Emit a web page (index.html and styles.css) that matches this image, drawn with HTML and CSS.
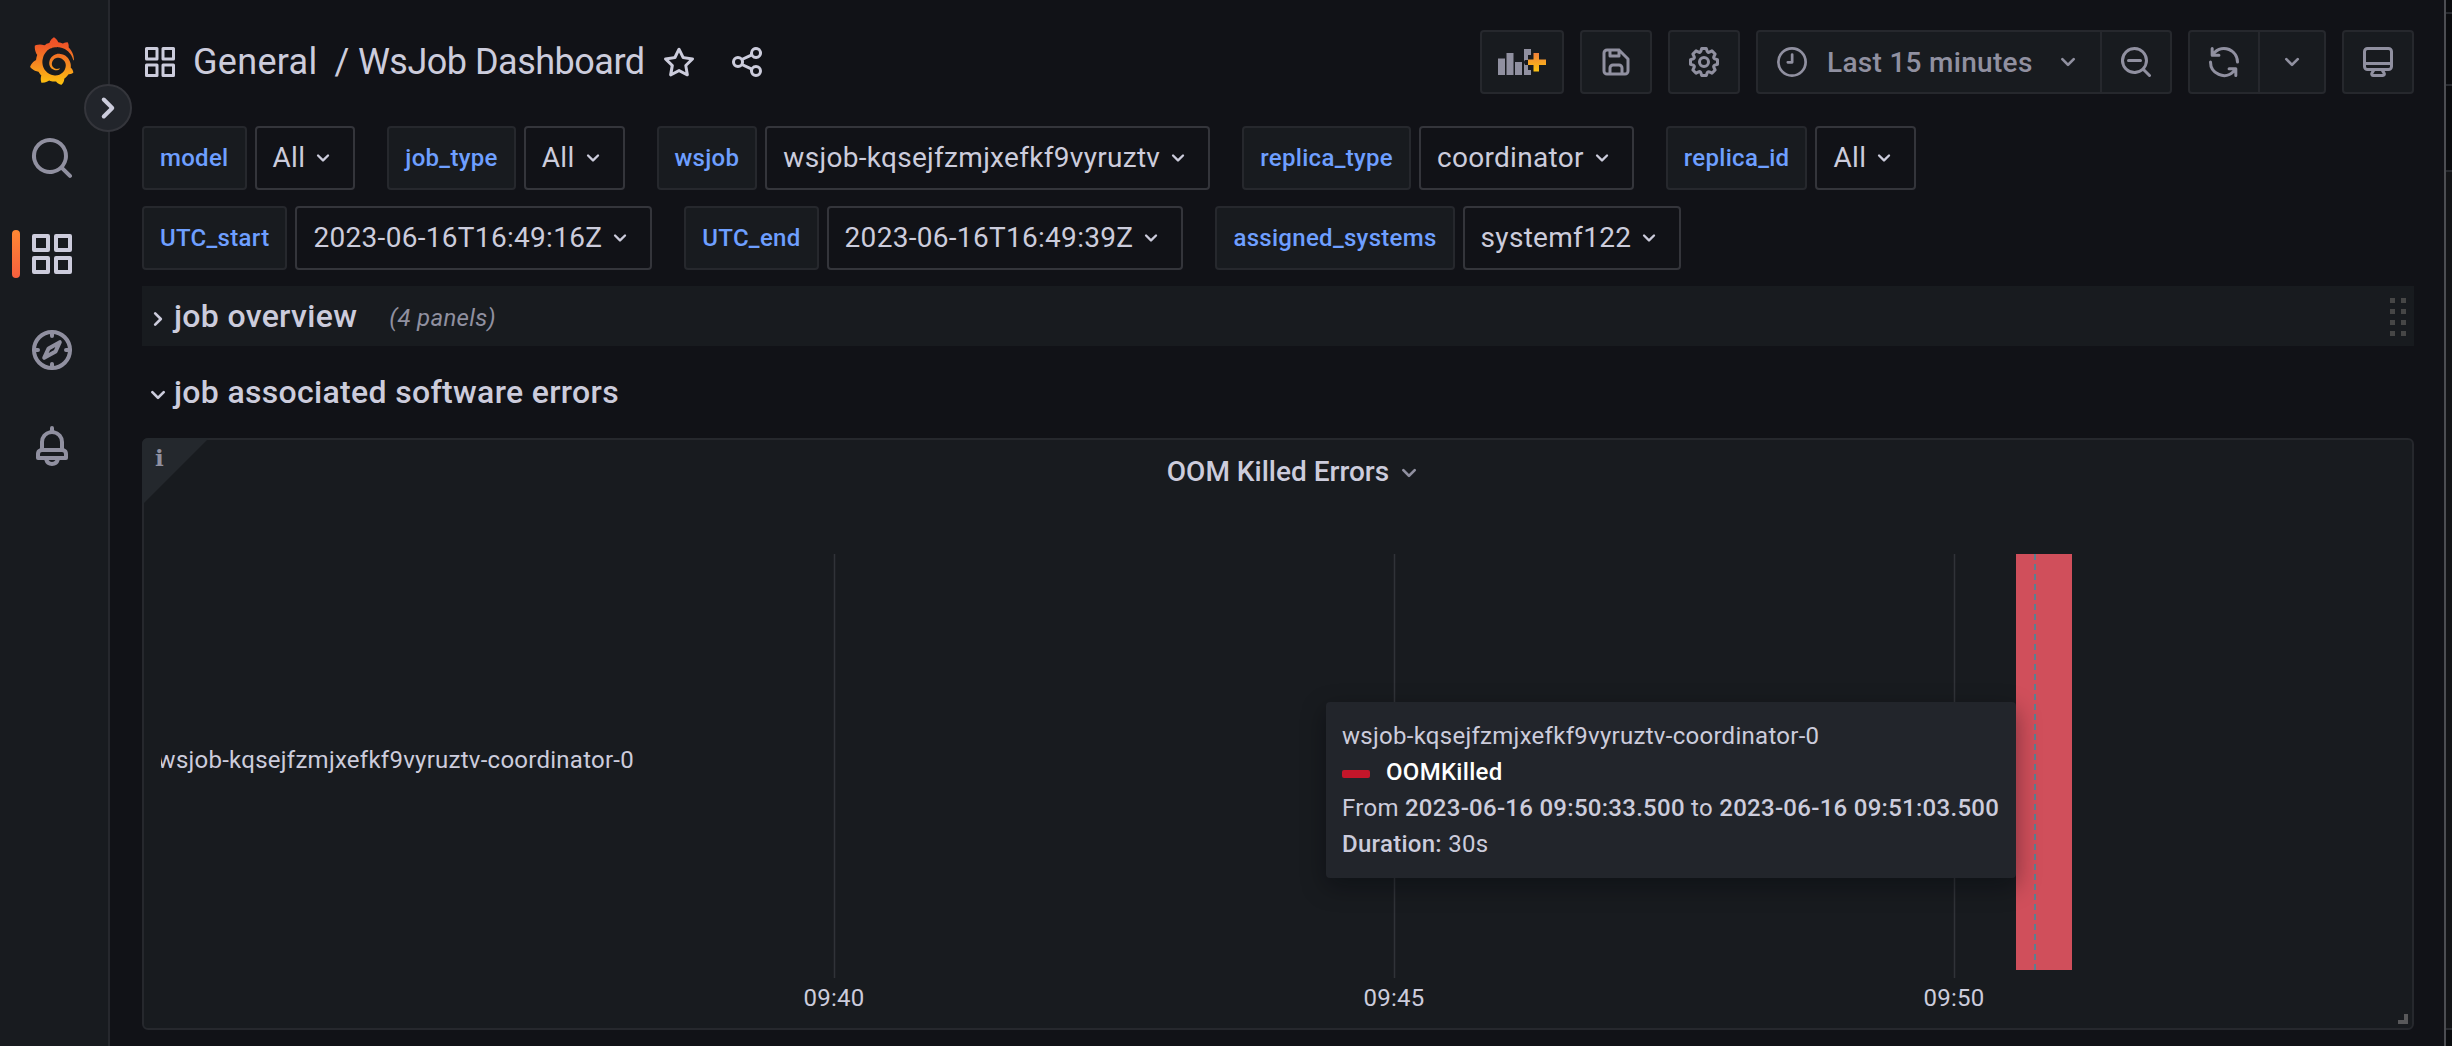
FILE: index.html
```html
<!DOCTYPE html>
<html lang="en">
<head>
  <meta charset="UTF-8">
  <title>WsJob Dashboard - Grafana</title>
  <link rel="stylesheet" href="styles.css">
</head>
<body>
  <!-- icon sprite -->
  <svg class="sprite">
    <symbol id="apps" viewBox="0 0 24 24"><path d="M10,13H3a1,1,0,0,0-1,1v7a1,1,0,0,0,1,1h7a1,1,0,0,0,1-1V14A1,1,0,0,0,10,13ZM9,20H4V15H9ZM21,2H14a1,1,0,0,0-1,1v7a1,1,0,0,0,1,1h7a1,1,0,0,0,1-1V3A1,1,0,0,0,21,2ZM20,9H15V4h5Zm1,4H14a1,1,0,0,0-1,1v7a1,1,0,0,0,1,1h7a1,1,0,0,0,1-1V14A1,1,0,0,0,21,13Zm-1,7H15V15h5ZM10,2H3A1,1,0,0,0,2,3v7a1,1,0,0,0,1,1h7a1,1,0,0,0,1-1V3A1,1,0,0,0,10,2ZM9,9H4V4H9Z"/></symbol>
    <symbol id="search" viewBox="0 0 24 24"><path d="M21.71,20.29,18,16.61A9,9,0,1,0,16.61,18l3.68,3.68a1,1,0,0,0,1.42,0A1,1,0,0,0,21.71,20.29ZM11,18a7,7,0,1,1,7-7A7,7,0,0,1,11,18Z"/></symbol>
    <symbol id="compass" viewBox="0 0 24 24"><g fill="none" stroke="currentColor" stroke-width="2" stroke-linecap="round" stroke-linejoin="round"><circle cx="12" cy="12" r="9"/><path d="M12 3v2M12 19v2M3 12h2M19 12h2M15.9 8.1L13.8 12.7L8.1 15.9L10.3 11.2Z"/></g></symbol>
    <symbol id="bell" viewBox="0 0 24 24"><path d="M18,13.18V10a6,6,0,0,0-5-5.91V3a1,1,0,0,0-2,0V4.09A6,6,0,0,0,6,10v3.18A3,3,0,0,0,4,16v2a1,1,0,0,0,1,1H8.14a4,4,0,0,0,7.72,0H19a1,1,0,0,0,1-1V16A3,3,0,0,0,18,13.18ZM8,10a4,4,0,0,1,8,0v3H8Zm4,10a2,2,0,0,1-1.72-1h3.44A2,2,0,0,1,12,20Zm6-3H6V16a1,1,0,0,1,1-1H17a1,1,0,0,1,1,1Z"/></symbol>
    <symbol id="star" viewBox="0 0 24 24"><path d="M22,9.67A1,1,0,0,0,21.14,9l-5.69-.83L12.9,3a1,1,0,0,0-1.8,0L8.55,8.16,2.86,9a1,1,0,0,0-.81.68,1,1,0,0,0,.25,1l4.13,4-1,5.68A1,1,0,0,0,6.9,21.44L12,18.77l5.1,2.67a.93.93,0,0,0,.46.12,1,1,0,0,0,.59-.19,1,1,0,0,0,.4-1l-1-5.68,4.13-4A1,1,0,0,0,22,9.67Zm-6.15,4a1,1,0,0,0-.29.88l.72,4.2-3.76-2a1.06,1.06,0,0,0-.94,0l-3.76,2,.72-4.2a1,1,0,0,0-.29-.88l-3-3,4.21-.61a1,1,0,0,0,.76-.55L12,5.7l1.88,3.82a1,1,0,0,0,.76.55l4.21.61Z"/></symbol>
    <symbol id="share" viewBox="0 0 24 24"><path d="M18,14a4,4,0,0,0-3.08,1.48l-5.1-2.35a3.64,3.64,0,0,0,0-2.26l5.1-2.35A4,4,0,1,0,14,6a4.17,4.17,0,0,0,.07.71L8.79,9.14a4,4,0,1,0,0,5.72l5.28,2.43A4.17,4.17,0,0,0,14,18a4,4,0,1,0,4-4ZM18,4a2,2,0,1,1-2,2A2,2,0,0,1,18,4ZM6,14a2,2,0,1,1,2-2A2,2,0,0,1,6,14Zm12,6a2,2,0,1,1,2-2A2,2,0,0,1,18,20Z"/></symbol>
    <symbol id="save" viewBox="0 0 24 24"><path d="M20.71,9.29l-6-6a1,1,0,0,0-.32-.21A1.09,1.09,0,0,0,14,3H6A3,3,0,0,0,3,6V18a3,3,0,0,0,3,3H18a3,3,0,0,0,3-3V10A1,1,0,0,0,20.71,9.29ZM9,5h4V7H9Zm6,14H9V16a1,1,0,0,1,1-1h4a1,1,0,0,1,1,1Zm4-1a1,1,0,0,1-1,1H17V16a3,3,0,0,0-3-3H10a3,3,0,0,0-3,3v3H6a1,1,0,0,1-1-1V6A1,1,0,0,1,6,5H7V8A1,1,0,0,0,8,9h6a1,1,0,0,0,1-1V6.41l4,4Z"/></symbol>
    <symbol id="cog" viewBox="0 0 24 24"><path d="M21.32,9.55l-1.89-.63.89-1.78A1,1,0,0,0,20.13,6L18,3.87a1,1,0,0,0-1.15-.19l-1.78.89-.63-1.89A1,1,0,0,0,13.5,2h-3a1,1,0,0,0-.95.68L8.92,4.57,7.14,3.68A1,1,0,0,0,6,3.87L3.87,6a1,1,0,0,0-.19,1.15l.89,1.78-1.89.63A1,1,0,0,0,2,10.5v3a1,1,0,0,0,.68.95l1.89.63-.89,1.78A1,1,0,0,0,3.87,18L6,20.13a1,1,0,0,0,1.15.19l1.78-.89.63,1.89a1,1,0,0,0,.95.68h3a1,1,0,0,0,.95-.68l.63-1.89,1.78.89A1,1,0,0,0,18,20.13L20.13,18a1,1,0,0,0,.19-1.15l-.89-1.78,1.89-.63A1,1,0,0,0,22,13.5v-3A1,1,0,0,0,21.32,9.55ZM20,12.78l-1.2.4A2,2,0,0,0,17.64,16l.57,1.14-1.1,1.1L16,17.64a2,2,0,0,0-2.79,1.16l-.4,1.2H11.22l-.4-1.2A2,2,0,0,0,8,17.64l-1.14.57-1.1-1.1L6.36,16A2,2,0,0,0,5.2,13.18L4,12.78V11.22l1.2-.4A2,2,0,0,0,6.36,8L5.79,6.89l1.1-1.1L8,6.36A2,2,0,0,0,10.82,5.2l.4-1.2h1.56l.4,1.2A2,2,0,0,0,16,6.36l1.14-.57,1.1,1.1L17.64,8a2,2,0,0,0,1.16,2.79l1.2.4ZM12,8a4,4,0,1,0,4,4A4,4,0,0,0,12,8Zm0,6a2,2,0,1,1,2-2A2,2,0,0,1,12,14Z"/></symbol>
    <symbol id="clock" viewBox="0 0 24 24"><g fill="none" stroke="currentColor" stroke-width="1.8" stroke-linecap="round" stroke-linejoin="round"><circle cx="12" cy="12" r="9.1"/><path d="M12.1 7v5.2H9.2"/></g></symbol>
    <symbol id="zoom-out" viewBox="0 0 24 24"><path d="M21.71,20.29,18,16.61A9,9,0,1,0,16.61,18l3.68,3.68a1,1,0,0,0,1.42,0A1,1,0,0,0,21.71,20.29ZM11,18a7,7,0,1,1,7-7A7,7,0,0,1,11,18ZM15,10H7a1,1,0,0,0,0,2h8a1,1,0,0,0,0-2Z"/></symbol>
    <symbol id="sync" viewBox="0 0 24 24"><path d="M19.91,15.51H15.38a1,1,0,0,0,0,2h2.4A8,8,0,0,1,4,12a1,1,0,0,0-2,0,10,10,0,0,0,16.88,7.23V21a1,1,0,0,0,2,0V16.5A1,1,0,0,0,19.91,15.51ZM12,2A10,10,0,0,0,5.12,4.77V3a1,1,0,0,0-2,0V7.5a1,1,0,0,0,1,1h4.5a1,1,0,0,0,0-2H6.22A8,8,0,0,1,20,12a1,1,0,0,0,2,0A10,10,0,0,0,12,2Z"/></symbol>
    <symbol id="monitor" viewBox="0 0 24 24"><path d="M19,2H5A3,3,0,0,0,2,5V15a3,3,0,0,0,3,3H7.64l-.58,1a2,2,0,0,0,0,2,2,2,0,0,0,1.75,1h6.46A2,2,0,0,0,17,21a2,2,0,0,0,0-2l-.59-1H19a3,3,0,0,0,3-3V5A3,3,0,0,0,19,2ZM8.77,20,10,18H14l1.2,2ZM20,15a1,1,0,0,1-1,1H5a1,1,0,0,1-1-1V14H20Zm0-3H4V5A1,1,0,0,1,5,4H19a1,1,0,0,1,1,1Z"/></symbol>
    <symbol id="angle-down" viewBox="0 0 24 24"><path d="M17,9.17a1,1,0,0,0-1.41,0L12,12.71,8.46,9.17a1,1,0,0,0-1.41,0,1,1,0,0,0,0,1.42l4.24,4.24a1,1,0,0,0,1.42,0L17,10.59A1,1,0,0,0,17,9.17Z"/></symbol>
    <symbol id="angle-right" viewBox="0 0 24 24"><path d="M14.83,11.29,10.59,7.05a1,1,0,0,0-1.42,0,1,1,0,0,0,0,1.41L12.71,12,9.17,15.54a1,1,0,0,0,0,1.41,1,1,0,0,0,.71.29,1,1,0,0,0,.71-.29l4.24-4.24A1,1,0,0,0,14.83,11.29Z"/></symbol>
  </svg>

  <nav class="sidebar">
    <svg class="logo" viewBox="0 0 351 365">
      <defs><linearGradient id="logo-fill" x1="0" y1="1" x2="0" y2="0"><stop offset="0" stop-color="#fcc40e"/><stop offset=".42" stop-color="#f58a20"/><stop offset=".85" stop-color="#ef5528"/><stop offset="1" stop-color="#ee4f28"/></linearGradient></defs>
      <path fill="url(#logo-fill)" d="M342,161.2c-0.6-6.1-1.6-13.1-3.6-20.9c-2-7.7-5-16.2-9.4-25c-4.4-8.8-10.1-17.9-17.5-26.8c-2.9-3.5-6.1-6.9-9.5-10.2c5.1-20.3-6.2-37.9-6.2-37.9c-19.5-1.2-31.9,6.1-36.5,9.4c-0.8-0.3-1.5-0.7-2.3-1c-3.3-1.3-6.7-2.6-10.3-3.7c-3.5-1.1-7.1-2.1-10.8-3c-3.7-0.9-7.4-1.6-11.2-2.2c-0.7-0.1-1.3-0.2-2-0.3c-8.5-27.2-32.9-38.6-32.9-38.6c-27.3,17.3-32.4,41.5-32.4,41.5s-0.1,0.5-0.3,1.4c-1.5,0.4-3,0.9-4.5,1.3c-2.1,0.6-4.2,1.4-6.2,2.2c-2.1,0.8-4.1,1.6-6.2,2.5c-4.1,1.8-8.2,3.8-12.2,6c-3.9,2.2-7.7,4.6-11.4,7.1c-0.5-0.2-1-0.4-1-0.4c-37.8-14.4-71.3,2.9-71.3,2.9c-3.1,40.2,15.1,65.5,18.7,70.1c-0.9,2.5-1.7,5-2.5,7.5c-2.8,9.1-4.9,18.4-6.2,28.1c-0.2,1.4-0.4,2.8-0.5,4.2C18.8,192.7,8.5,228,8.5,228c29.1,33.5,63.1,35.6,63.1,35.6c0,0,0.1-0.1,0.1-0.1c4.3,7.7,9.3,15,14.9,21.9c2.4,2.9,4.8,5.6,7.4,8.3c-10.6,30.4,1.5,55.6,1.5,55.6c32.4,1.2,53.7-14.2,58.2-17.7c3.2,1.1,6.5,2.1,9.8,2.9c10,2.6,20.2,4.1,30.4,4.5c2.5,0.1,5.1,0.2,7.6,0.1l1.2,0l0.8,0l1.6,0l1.6-0.1l0,0.1c15.3,21.8,42.1,24.9,42.1,24.9c19.1-20.1,20.2-40.1,20.2-44.4l0,0c0,0,0-0.1,0-0.3c0-0.4,0-0.6,0-0.6l0,0c0-0.3,0-0.6,0-0.9c4-2.8,7.8-5.8,11.4-9.1c7.6-6.9,14.3-14.8,19.9-23.3c0.5-0.8,1-1.6,1.5-2.4c21.6,1.2,36.9-13.4,36.9-13.4c-3.6-22.5-16.4-33.5-19.1-35.6l0,0c0,0-0.1-0.1-0.3-0.2c-0.2-0.1-0.2-0.2-0.2-0.2c0,0,0,0,0,0c-0.1-0.1-0.3-0.2-0.5-0.3c0.1-1.4,0.2-2.7,0.3-4.1c0.2-2.4,0.2-4.9,0.2-7.3l0-1.8l0-0.9l0-0.5c0-0.6,0-0.4,0-0.6l-0.1-1.5l-0.1-2c0-0.7-0.1-1.3-0.2-1.9c-0.1-0.6-0.1-1.3-0.2-1.9l-0.2-1.9l-0.3-1.9c-0.4-2.5-0.8-4.9-1.4-7.4c-2.3-9.7-6.1-18.9-11-27.2c-5-8.3-11.2-15.6-18.3-21.8c-7-6.2-14.9-11.2-23.1-14.9c-8.3-3.7-16.9-6.1-25.5-7.2c-4.3-0.6-8.6-0.8-12.9-0.7l-1.6,0l-0.4,0c-0.1,0-0.6,0-0.5,0l-0.7,0l-1.6,0.1c-0.6,0-1.2,0.1-1.7,0.1c-2.2,0.2-4.4,0.5-6.5,0.9c-8.6,1.6-16.7,4.7-23.8,9c-7.1,4.3-13.3,9.6-18.3,15.6c-5,6-8.9,12.7-11.6,19.6c-2.7,6.9-4.2,14.1-4.6,21c-0.1,1.7-0.1,3.5-0.1,5.2c0,0.4,0,0.9,0,1.3l0.1,1.4c0.1,0.8,0.1,1.7,0.2,2.5c0.3,3.5,1,6.9,1.9,10.1c1.9,6.5,4.9,12.4,8.6,17.4c3.7,5,8.2,9.1,12.9,12.4c4.7,3.2,9.8,5.5,14.8,7c5,1.5,10,2.1,14.7,2.1c0.6,0,1.2,0,1.7,0c0.3,0,0.6,0,0.9,0c0.3,0,0.6,0,0.9-0.1c0.5,0,1-0.1,1.5-0.1c0.1,0,0.3,0,0.4-0.1l0.5-0.1c0.3,0,0.6-0.1,0.9-0.1c0.6-0.1,1.1-0.2,1.7-0.3c0.6-0.1,1.1-0.2,1.6-0.4c1.1-0.2,2.1-0.6,3.1-0.9c2-0.7,4-1.5,5.7-2.4c1.8-0.9,3.4-2,5-3c0.4-0.3,0.9-0.6,1.3-1c1.6-1.3,1.9-3.7,0.6-5.3c-1.1-1.4-3.1-1.8-4.7-0.9c-0.4,0.2-0.8,0.4-1.2,0.6c-1.4,0.7-2.8,1.3-4.3,1.8c-1.5,0.5-3.1,0.9-4.7,1.2c-0.8,0.1-1.6,0.2-2.5,0.3c-0.4,0-0.8,0.1-1.3,0.1c-0.4,0-0.9,0-1.2,0c-0.4,0-0.8,0-1.2,0c-0.5,0-1,0-1.5-0.1c0,0-0.3,0-0.1,0l-0.2,0l-0.3,0c-0.2,0-0.5,0-0.7-0.1c-0.5-0.1-0.9-0.1-1.4-0.2c-3.7-0.5-7.4-1.6-10.9-3.2c-3.6-1.6-7-3.8-10.1-6.6c-3.1-2.8-5.8-6.1-7.9-9.9c-2.1-3.8-3.6-8-4.3-12.4c-0.3-2.2-0.5-4.5-0.4-6.7c0-0.6,0.1-1.2,0.1-1.8c0,0.2,0-0.1,0-0.1l0-0.2l0-0.5c0-0.3,0.1-0.6,0.1-0.9c0.1-1.2,0.3-2.4,0.5-3.6c1.7-9.6,6.5-19,13.9-26.1c1.9-1.8,3.9-3.4,6-4.9c2.1-1.5,4.4-2.8,6.8-3.9c2.4-1.1,4.8-2,7.4-2.7c2.5-0.7,5.1-1.1,7.8-1.4c1.3-0.1,2.6-0.2,4-0.2c0.4,0,0.6,0,0.9,0l1.1,0l0.7,0c0.3,0,0,0,0.1,0l0.3,0l1.1,0.1c2.9,0.2,5.7,0.6,8.5,1.3c5.6,1.2,11.1,3.3,16.2,6.1c10.2,5.7,18.9,14.5,24.2,25.1c2.7,5.3,4.6,11,5.5,16.9c0.2,1.5,0.4,3,0.5,4.5l0.1,1.1l0.1,1.1c0,0.4,0,0.8,0,1.1c0,0.4,0,0.8,0,1.1l0,1l0,1.1c0,0.7-0.1,1.9-0.1,2.6c-0.1,1.6-0.3,3.3-0.5,4.9c-0.2,1.6-0.5,3.2-0.8,4.8c-0.3,1.6-0.7,3.2-1.1,4.7c-0.8,3.1-1.8,6.2-3,9.3c-2.4,6-5.6,11.8-9.4,17.1c-7.7,10.6-18.2,19.2-30.2,24.7c-6,2.7-12.3,4.7-18.8,5.7c-3.2,0.6-6.5,0.9-9.8,1l-0.6,0l-0.5,0l-1.1,0l-1.6,0l-0.8,0c0.4,0-0.1,0-0.1,0l-0.3,0c-1.8,0-3.5-0.1-5.3-0.3c-7-0.5-13.9-1.8-20.7-3.7c-6.7-1.9-13.2-4.6-19.4-7.8c-12.3-6.6-23.4-15.6-32-26.5c-4.3-5.4-8.1-11.3-11.2-17.4c-3.1-6.1-5.6-12.6-7.4-19.1c-1.8-6.6-2.9-13.3-3.4-20.1l-0.1-1.3l0-0.3l0-0.3l0-0.6l0-1.1l0-0.3l0-0.4l0-0.8l0-1.6l0-0.3c0,0,0,0.1,0-0.1l0-0.6c0-0.8,0-1.7,0-2.5c0.1-3.3,0.4-6.8,0.8-10.2c0.4-3.4,1-6.9,1.7-10.3c0.7-3.4,1.5-6.8,2.5-10.2c1.9-6.7,4.3-13.2,7.1-19.3c5.7-12.2,13.1-23.1,22-31.8c2.2-2.2,4.5-4.2,6.9-6.2c2.4-1.9,4.9-3.7,7.5-5.4c2.5-1.7,5.2-3.2,7.9-4.6c1.3-0.7,2.7-1.4,4.1-2c0.7-0.3,1.4-0.6,2.1-0.9c0.7-0.3,1.4-0.6,2.1-0.9c2.8-1.2,5.7-2.2,8.7-3.1c0.7-0.2,1.5-0.4,2.2-0.7c0.7-0.2,1.5-0.4,2.2-0.6c1.5-0.4,3-0.8,4.5-1.1c0.7-0.2,1.5-0.3,2.3-0.5c0.8-0.2,1.5-0.3,2.3-0.5c0.8-0.1,1.5-0.3,2.3-0.4l1.1-0.2l1.2-0.2c0.8-0.1,1.5-0.2,2.3-0.3c0.9-0.1,1.7-0.2,2.6-0.3c0.7-0.1,1.9-0.2,2.6-0.3c0.5-0.1,1.1-0.1,1.6-0.2l1.1-0.1l0.5-0.1l0.6,0c0.9-0.1,1.7-0.1,2.6-0.2l1.3-0.1c0,0,0.5,0,0.1,0l0.3,0l0.6,0c0.7,0,1.5-0.1,2.2-0.1c2.9-0.1,5.9-0.1,8.8,0c5.8,0.2,11.5,0.9,17,1.9c11.1,2.1,21.5,5.6,31,10.3c9.5,4.6,17.9,10.3,25.3,16.5c0.5,0.4,0.9,0.8,1.4,1.2c0.4,0.4,0.9,0.8,1.3,1.2c0.9,0.8,1.7,1.6,2.6,2.4c0.9,0.8,1.7,1.6,2.5,2.4c0.8,0.8,1.6,1.6,2.4,2.5c3.1,3.3,6,6.6,8.6,10c5.2,6.7,9.4,13.5,12.7,19.9c0.2,0.4,0.4,0.8,0.6,1.2c0.2,0.4,0.4,0.8,0.6,1.2c0.4,0.8,0.8,1.6,1.1,2.4c0.4,0.8,0.7,1.5,1.1,2.3c0.3,0.8,0.7,1.5,1,2.3c1.2,3,2.4,5.9,3.3,8.6c1.5,4.4,2.6,8.3,3.5,11.7c0.3,1.4,1.6,2.3,3,2.1c1.5-0.1,2.6-1.3,2.6-2.8C342.6,170.4,342.5,166.1,342,161.2z"/>
    </svg>
    <a class="nav-item"><svg class="icon"><use href="#search"/></svg></a>
    <a class="nav-item active"><svg class="icon"><use href="#apps"/></svg></a>
    <a class="nav-item"><svg class="icon"><use href="#compass"/></svg></a>
    <a class="nav-item"><svg class="icon"><use href="#bell"/></svg></a>
    <button class="nav-toggle"><svg class="icon"><use href="#angle-right"/></svg></button>
  </nav>

  <main class="page">
    <header class="toolbar">
      <svg class="icon md"><use href="#apps"/></svg>
      <h1><span class="folder">General</span><span class="sep">/</span>WsJob Dashboard</h1>
      <svg class="icon md star"><use href="#star"/></svg>
      <svg class="icon md share"><use href="#share"/></svg>
      <div class="actions">
        <button class="btn add-panel">
          <svg width="50" height="28" viewBox="0 0 50 28">
            <defs><linearGradient id="plus-fill" x1="0" y1="0" x2="0" y2="1"><stop offset="0" stop-color="#f1803a"/><stop offset="1" stop-color="#fcc310"/></linearGradient></defs>
            <path d="M1 10.5h7V27H1zM9.5 5h7v22h-7zM18 14h7v13h-7zM27 1h7v6h-3v5h-3q-2 2 0 5h3v5h3v5h-7z" fill="currentColor"/>
            <path d="M36.500 5h5.500v6.500H49v5.500h-7v6.500h-5.500v-6.500H31v-5.500h5.500z" fill="url(#plus-fill)"/>
          </svg>
        </button>
        <button class="btn"><svg class="icon md"><use href="#save"/></svg></button>
        <button class="btn"><svg class="icon md"><use href="#cog"/></svg></button>
        <div class="btn-group">
          <button class="btn time"><svg class="icon md"><use href="#clock"/></svg><span>Last 15 minutes</span><svg class="icon sm"><use href="#angle-down"/></svg></button>
          <button class="btn"><svg class="icon md"><use href="#zoom-out"/></svg></button>
        </div>
        <div class="btn-group">
          <button class="btn"><svg class="icon md"><use href="#sync"/></svg></button>
          <button class="btn interval"><svg class="icon sm"><use href="#angle-down"/></svg></button>
        </div>
        <button class="btn"><svg class="icon md"><use href="#monitor"/></svg></button>
      </div>
    </header>

    <section class="variables">
      <div class="var-row">
        <div class="variable"><label>model</label><div class="select">All<svg class="icon xs"><use href="#angle-down"/></svg></div></div>
        <div class="variable"><label>job_type</label><div class="select">All<svg class="icon xs"><use href="#angle-down"/></svg></div></div>
        <div class="variable"><label>wsjob</label><div class="select">wsjob-kqsejfzmjxefkf9vyruztv<svg class="icon xs"><use href="#angle-down"/></svg></div></div>
        <div class="variable"><label>replica_type</label><div class="select">coordinator<svg class="icon xs"><use href="#angle-down"/></svg></div></div>
        <div class="variable"><label>replica_id</label><div class="select">All<svg class="icon xs"><use href="#angle-down"/></svg></div></div>
      </div>
      <div class="var-row">
        <div class="variable"><label>UTC_start</label><div class="select">2023-06-16T16:49:16Z<svg class="icon xs"><use href="#angle-down"/></svg></div></div>
        <div class="variable"><label>UTC_end</label><div class="select">2023-06-16T16:49:39Z<svg class="icon xs"><use href="#angle-down"/></svg></div></div>
        <div class="variable"><label>assigned_systems</label><div class="select">systemf122<svg class="icon xs"><use href="#angle-down"/></svg></div></div>
      </div>
    </section>

    <div class="dash-row collapsed">
      <svg class="icon sm"><use href="#angle-right"/></svg><h2>job overview</h2><span class="count">(4 panels)</span>
      <div class="grip"><i></i><i></i><i></i><i></i><i></i><i></i><i></i><i></i></div>
    </div>
    <div class="dash-row">
      <svg class="icon sm"><use href="#angle-down"/></svg><h2>job associated software errors</h2>
    </div>

    <section class="panel">
      <div class="info-corner"><span>i</span></div>
      <div class="panel-title">OOM Killed Errors<svg class="icon sm"><use href="#angle-down"/></svg></div>
      <svg class="chart" width="2268" height="522" viewBox="0 0 2268 522">
        <clipPath id="axis-clip"><rect x="17" y="200" width="500" height="100"/></clipPath>
        <g class="grid">
          <path d="M690.500 48v424M1250.500 48v424M1810.500 48v424"/>
        </g>
        <g class="axis">
          <text x="490" y="262" text-anchor="end" clip-path="url(#axis-clip)">wsjob-kqsejfzmjxefkf9vyruztv-coordinator-0</text>
          <text x="690" y="500" text-anchor="middle">09:40</text>
          <text x="1250" y="500" text-anchor="middle">09:45</text>
          <text x="1810" y="500" text-anchor="middle">09:50</text>
        </g>
        <rect class="bar" x="1872" y="48" width="56" height="416"/>
        <path class="cursor" d="M1891 48v416"/>
      </svg>
      <div class="tooltip">
        <div>wsjob-kqsejfzmjxefkf9vyruztv-coordinator-0</div>
        <div class="series"><i></i>OOMKilled</div>
        <div>From <b>2023-06-16 09:50:33.500</b> to <b>2023-06-16 09:51:03.500</b></div>
        <div><b>Duration:</b> 30s</div>
      </div>
      <div class="resize"></div>
    </section>
  </main>

  <aside class="edge"><div></div><div></div><div></div><div class="rest"></div></aside>
</body>
</html>
```
FILE: styles.css
```css
:root {
  --bg: #111217;
  --panel: #181b1f;
  --raised: #22252b;
  --text: #ccccdc;
  --muted: #9090a0;
  --line: #26282d;
  --line-strong: #34353b;
  --link: #6e9fff;
}
* { box-sizing: border-box; }
body { margin: 0; height: 1046px; display: flex; overflow: hidden; background: var(--bg); color: var(--text); font-family: Roboto, sans-serif; font-size: 28px; letter-spacing: 0.01071em; }
h1, h2 { margin: 0; font-weight: 500; }
b { font-weight: 500; }
button { font: inherit; letter-spacing: inherit; padding: 0; }
.sprite { position: absolute; width: 0; height: 0; }
.icon { display: block; flex: none; width: 48px; height: 48px; fill: currentColor; }
.icon.md { width: 36px; height: 36px; }
.icon.sm { width: 32px; height: 32px; }
.icon.xs { width: 28px; height: 28px; }

/* sidebar */
.sidebar { position: relative; flex: none; width: 110px; background: var(--panel); border-right: 2px solid var(--line); display: flex; flex-direction: column; padding-top: 37px; }
.logo { width: 46px; height: 48px; margin: 0 0 25px 29px; }
.nav-item { position: relative; height: 96px; padding: 24px 0 0 28px; color: var(--muted); }
.nav-item.active { color: var(--text); }
.nav-item.active::before { content: ""; position: absolute; left: 12px; top: 24px; width: 8px; height: 48px; border-radius: 4px; background: linear-gradient(#ff8833, #f55f3e); }
.nav-toggle { position: absolute; left: 84px; top: 84px; width: 48px; height: 48px; border: 2px solid var(--line-strong); border-radius: 50%; background: var(--raised); color: var(--text); display: flex; align-items: center; justify-content: center; }

/* main column */
.page { flex: none; width: 2334px; padding: 30px 30px 0 32px; }
.toolbar { display: flex; align-items: center; height: 64px; }
h1 { display: flex; margin-left: 15px; font-size: 36px; font-weight: 400; white-space: nowrap; line-height: 64px; letter-spacing: -0.5px; }
.folder { margin-right: 17px; letter-spacing: 0.3px; }
.sep { margin-right: 9px; }
.star { margin-left: 16px; }
.share { margin-left: 32px; }
.actions { margin-left: auto; display: flex; gap: 16px; }
.btn { display: flex; align-items: center; justify-content: center; width: 72px; height: 64px; border: 2px solid var(--line); border-radius: 4px; background: var(--panel); color: var(--muted); }
.add-panel { width: 84px; }
.btn-group { display: flex; }
.btn-group .btn:first-child { border-radius: 4px 0 0 4px; }
.btn-group .btn:last-child { border-radius: 0 4px 4px 0; border-left: 0; }
.btn-group .btn:last-child { width: 70px; }
.btn-group .interval:last-child { width: 66px; }
.time.btn { width: 346px; justify-content: flex-start; padding: 0 16px; font-weight: 500; white-space: nowrap; }
.time span { margin: 0 auto 0 17px; }

.variables { display: flex; flex-direction: column; gap: 16px; margin: 32px 0 16px; }
.var-row { display: flex; gap: 32px; }
.variable { display: flex; gap: 8px; }
.variable label, .select { display: flex; align-items: center; height: 64px; border-radius: 4px; white-space: nowrap; }
.variable label { padding: 0 16px; border: 2px solid var(--line); background: var(--panel); color: var(--link); font-size: 24px; font-weight: 500; }
.select { padding: 0 16px 1px; border: 2px solid var(--line-strong); }
.select .icon { margin: 0 0 0 4px; }

.dash-row { display: flex; align-items: center; height: 60px; margin-bottom: 16px; }
.dash-row.collapsed { background: var(--panel); }
.dash-row .icon { margin-top: 6px; }
.dash-row h2 { font-size: 32px; letter-spacing: 0.01em; }
.count { margin: 4px 0 0 32px; font-size: 24px; font-style: italic; color: var(--muted); }
.grip { display: grid; grid-template-columns: 5px 5px; gap: 6px; margin: 2px 8px 0 auto; }
.grip i { width: 5px; height: 5px; background: #464646; }

/* panel */
.panel { position: relative; width: 2272px; height: 592px; background: var(--panel); border: 2px solid var(--line); border-radius: 6px; }
.info-corner { position: absolute; left: -2px; top: -2px; width: 67px; height: 67px; border-radius: 6px 0 0 0; background: #24282d; clip-path: polygon(0 0, 100% 0, 0 100%); }
.info-corner span { position: absolute; left: 13px; top: 6px; font: bold 23px/28px "DejaVu Serif", serif; letter-spacing: 0; color: var(--muted); }
.panel-title { display: flex; align-items: center; justify-content: center; height: 62px; margin-bottom: 4px; padding-left: 36px; font-weight: 500; letter-spacing: 0; }
.panel-title .icon { margin: 4px 0 0 4px; color: var(--muted); }
.chart { display: block; }
.grid path { stroke: #303338; stroke-width: 1.5; }
.axis text { fill: var(--text); font-size: 24px; letter-spacing: 0.01071em; }
.bar { fill: #d04f5b; }
.cursor { stroke: #5c7f91; stroke-width: 2; stroke-dasharray: 6 4; }
.tooltip { position: absolute; left: 1182px; top: 262px; width: 690px; height: 176px; padding: 16px; border-radius: 4px; background: var(--raised); box-shadow: 0 8px 24px rgba(1, 4, 9, 0.4); font-size: 24px; line-height: 36px; white-space: nowrap; letter-spacing: 0.28px; }
.series { display: flex; align-items: center; color: #fff; font-weight: 500; }
.series i { width: 28px; height: 8px; margin: 4px 16px 0 0; border-radius: 2px; background: #c4162a; }
.resize { position: absolute; right: 4px; bottom: 4px; width: 10px; height: 10px; border: solid #58585a; border-width: 0 4px 4px 0; }

/* sliver of the neighbouring window */
.edge { flex: none; width: 8px; border-left: 2px solid #4c4d52; background: #0b0c0f; display: flex; flex-direction: column; }
.edge div { flex: none; height: 72px; border-bottom: 2px solid #292b30; }
.edge div:first-child { height: 14px; }
.edge div:nth-child(3) { height: 86px; }
.edge .rest { height: 858px; background: #131417; }
```
